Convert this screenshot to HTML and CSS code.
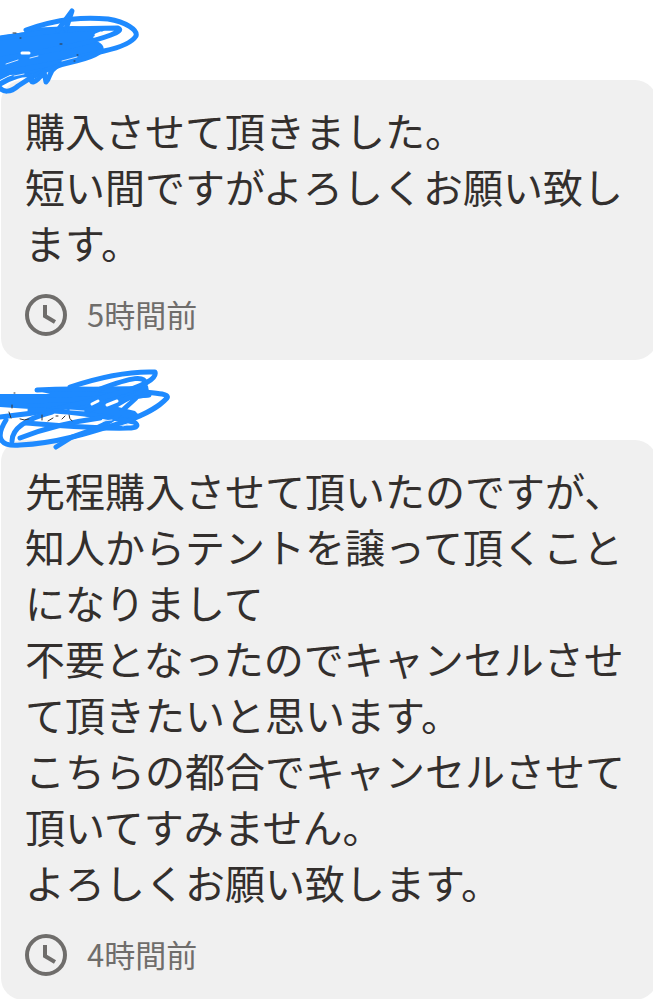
FILE: index.html
```
<!DOCTYPE html>
<html lang="ja">
<head>
    <meta charset="utf-8">
    <meta name="viewport" content="width=device-width, initial-scale=1">
    <title>コメント</title>
    <link rel="stylesheet" href="styles.css">
</head>
<body>
    <main class="comments">
        <article class="comment">
            <header class="user">
                <svg class="scribble" width="180" height="100" viewBox="0 0 180 100" aria-hidden="true">
                    <path class="fill" d="M0 36 L25 32 L28 28 L72 26 L110 27 L93 37 L98 43 L103 50 L90 57 L54 67 L35 74 L10 75 L0 80 Z"/>
                    <path d="M0 38 C35 34 60 28 118 28 C126 31 105 38 76 45 C50 51 28 54 0 59"/>
                    <path d="M26 30 C60 18 85 17 108 19 C126 22 138 30 136 36 C131 44 118 48 104 51 C75 58 42 68 0 72"/>
                    <path d="M58 30 L72 11 L66 29"/>
                    <path d="M97 44 C108 50 96 56 76 61 C50 66 32 76 18 86 C10 93 3 92 0 88"/>
                    <path d="M0 84 C10 78 25 72 31 76 C30 85 35 84 44 72 L46 82 C51 77 48 72 56 67"/>
                    <path class="gap" d="M22 53 L29 53 M96 35 L101 33"/>
                    <path class="gap thin" d="M6 64 L18 60 M30 58 L38 56 M62 61 L77 57 M14 76 L24 74"/>
                    <path class="ink" d="M13 33 h3 M20 38 h1 M60 44 h2 M74 61 h1 M77 55 h1"/>
                </svg>
            </header>
            <div class="card">
                <p class="text">購入させて頂きました。<br>短い間ですがよろしくお願い致します。</p>
                <div class="time">
                    <svg class="clock" width="42" height="42" viewBox="0 0 42 42" aria-hidden="true">
                        <circle cx="21" cy="21" r="19"/>
                        <path d="M20 11 V22 L30 28"/>
                    </svg>
                    <time>5時間前</time>
                </div>
            </div>
        </article>

        <article class="comment">
            <header class="user">
                <svg class="scribble" width="180" height="100" viewBox="0 0 180 100" aria-hidden="true">
                    <path class="fill" d="M0 34 L50 34 L38 31 L70 27 L148 26 L150 37 L130 40 L118 47 L135 51 L142 58 L112 60 L88 57 L62 48 L30 49 L0 47 Z"/>
                    <path d="M37 30 C75 28 110 28 149 35 C105 38 50 42 0 41"/>
                    <path d="M70 27 C100 17 130 11 155 12 C157 18 145 26 115 34 C80 45 42 53 0 57"/>
                    <path d="M100 29 C130 18 148 13 145 27 C140 38 105 45 80 52"/>
                    <path d="M145 32 C156 33 170 34 167 38 C158 48 145 54 130 60 C95 71 60 83 20 85 C-2 87 -4 76 6 60"/>
                    <path d="M30 50 C60 50 105 56 134 62 C140 66 136 68 128 68 C100 69 65 66 26 63"/>
                    <path d="M12 81 C12 70 22 60 52 52"/>
                    <path d="M56 87 L72 77 C92 70 112 64 124 49 L136 38 M20 78 C45 68 70 62 100 58"/>
                    <path class="gap" d="M92 44 L98 41 M107 45 L117 41"/>
                    <path class="gap thin" d="M103 61 L112 60 M123 66 L128 64 M70 50 L84 51"/>
                    <path class="ink" d="M14 33 h1 M12 45 v3 M9 52 l2 6 M20 59 q4 2 9 0 M42 55 v5 M48 61 l5 -3 M56 56 h2 M62 59 l3 -3 M69 55 q0 4 3 6"/>
                </svg>
            </header>
            <div class="card">
                <p class="text">先程購入させて頂いたのですが、知人からテントを譲って頂くことになりまして<br>不要となったのでキャンセルさせて頂きたいと思います。<br>こちらの都合でキャンセルさせて頂いてすみません。<br>よろしくお願い致します。</p>
                <div class="time">
                    <svg class="clock" width="42" height="42" viewBox="0 0 42 42" aria-hidden="true">
                        <circle cx="21" cy="21" r="19"/>
                        <path d="M20 11 V22 L30 28"/>
                    </svg>
                    <time>4時間前</time>
                </div>
            </div>
        </article>
    </main>
</body>
</html>
```
FILE: styles.css
```
body {
    margin: 0;
    background-color: #fff;
    color: #332f2d;
    font-family: "Noto Sans CJK JP", sans-serif;
    overflow: hidden;
}

.comments {
    margin: 0 -4px 0 1px;
}

.user {
    position: relative;
    height: 80px;
}

/* pen strokes over the user name, they run onto the card below */
.scribble {
    position: absolute;
    top: 0;
    left: -1px;
    fill: none;
    stroke: #1e8aff;
    stroke-width: 5;
    stroke-linecap: round;
    stroke-linejoin: round;
}

.scribble .fill {
    fill: #1e8aff;
    stroke: none;
}

.scribble .gap {
    stroke: #fff;
    stroke-width: 3;
}

.scribble .thin {
    stroke: #cfe5ff;
    stroke-width: 1;
}

.scribble .ink {
    stroke: #333;
    stroke-width: 1;
}

.card {
    padding: 22px 24px;
    border-radius: 22px;
    background-color: #f0f0f0;
}

.text {
    margin: 0;
    font-size: 40px;
    line-height: 56px;
}

.time {
    display: flex;
    align-items: flex-start;
    gap: 20px;
    height: 44px;
    margin-top: 24px;
    color: #6f6d6b;
    font-size: 31px;
    line-height: 40px;
}

.clock {
    fill: none;
    stroke: #6f6d6b;
    stroke-width: 4;
}
```
